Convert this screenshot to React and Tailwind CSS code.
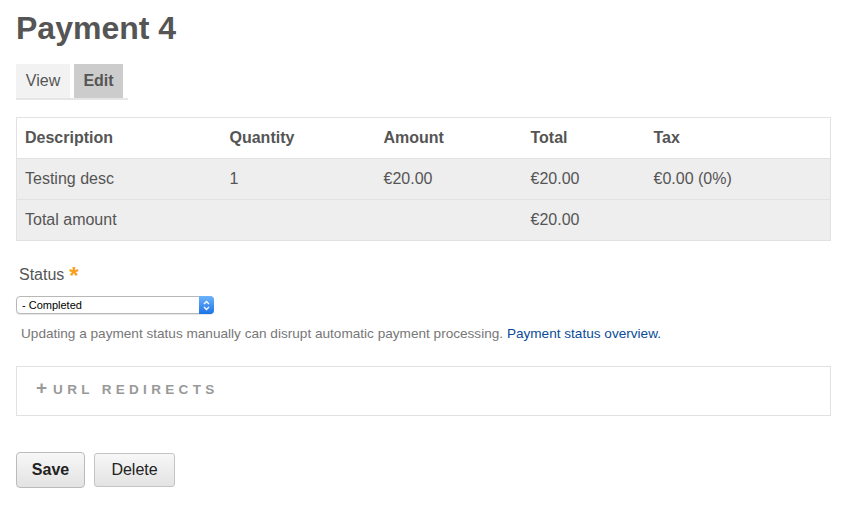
export default function App() {
  const rows = [
    ['Testing desc', '1', '€20.00', '€20.00', '€0.00 (0%)'],
    ['Total amount', '', '', '€20.00', ''],
  ]
  const cols = ['w-[205px]', 'w-[154px]', 'w-[147px]', 'w-[123px]', '']

  return (
    <div className="min-h-[518px] bg-white pl-4 pr-[14px] pt-[9px] text-[#555]" style={{ fontFamily: '"Liberation Sans", Arial, sans-serif' }}>
      <h1 className="text-[32px] font-bold leading-[38px] text-[#555]">Payment 4</h1>

      {/* Tabs */}
      <div className="mt-[17px] flex w-[112px] gap-1 border-b-2 border-[#e6e6e6]">
        <a className="flex h-[34px] w-[54px] items-center justify-center bg-[#f2f2f2] text-[16px] text-[#555]">View</a>
        <a className="flex h-[34px] w-[49px] items-center justify-center bg-[#cccccc] text-[16px] font-bold text-[#555]">Edit</a>
      </div>

      {/* Items table */}
      <table className="mt-[17px] w-full border-collapse border border-[#e2e2e2] text-[16px]">
        <thead>
          <tr className="h-[41px] bg-white">
            {['Description', 'Quantity', 'Amount', 'Total', 'Tax'].map((h, i) => (
              <th key={h} className={`${cols[i]} px-2 text-left font-bold`}>{h}</th>
            ))}
          </tr>
        </thead>
        <tbody>
          {rows.map((r, ri) => (
            <tr key={ri} className="h-[41px] border-t border-[#e2e2e2] bg-[#eeeeee]">
              {r.map((c, ci) => (
                <td key={ci} className="px-2">{c}</td>
              ))}
            </tr>
          ))}
        </tbody>
      </table>

      {/* Status */}
      <div className="mt-[24px] flex h-[20px] items-center gap-[5px] pl-[3px] text-[16px] leading-[20px]">
        Status <span className="mt-[2px] text-[24px] font-bold leading-none text-[#f8a01c]">*</span>
      </div>
      <div className="mt-[11px] flex h-[18px] w-[198px] items-center justify-between rounded-[4px] border border-[#b8b8b8] bg-white pl-[5px] shadow-[0_1px_1px_rgba(0,0,0,0.1)]">
        <span className="text-[11px] text-black">- Completed</span>
        <span className="flex h-[18px] w-[15px] items-center justify-center rounded-r-[4px] bg-gradient-to-b from-[#6cb3fa] to-[#1a72e8] -mr-px">
          <svg width="7" height="11" viewBox="0 0 7 11" fill="none" stroke="white" strokeWidth="1.3">
            <path d="M1 4 L3.5 1.5 L6 4" />
            <path d="M1 7 L3.5 9.5 L6 7" />
          </svg>
        </span>
      </div>
      <p className="mt-[10px] pl-[5px] text-[13.6px] text-[#777]">
        Updating a payment status manually can disrupt automatic payment processing.{' '}
        <a className="text-[#0b4c97]">Payment status overview.</a>
      </p>

      {/* URL redirects */}
      <div className="mt-[22px] flex h-[50px] items-center border border-[#e2e2e2] pb-[4px] pl-[19px]">
        <span className="mr-[6px] -mt-[3px] text-[19px] font-bold leading-none text-[#999]">+</span>
        <span className="text-[13.5px] font-bold leading-none tracking-[0.32em] text-[#999]">URL REDIRECTS</span>
      </div>

      {/* Actions */}
      <div className="mt-[36px] flex items-center gap-[9px]">
        <button className="h-[36px] w-[69px] rounded-[4px] border border-[#bbb] bg-gradient-to-b from-[#f7f7f7] to-[#e3e3e3] text-[16px] font-bold text-[#222]">Save</button>
        <button className="h-[34px] w-[81px] rounded-[3px] border border-[#c4c4c4] bg-gradient-to-b from-[#f7f7f7] to-[#e3e3e3] text-[16px] text-[#222]">Delete</button>
      </div>
    </div>
  )
}
